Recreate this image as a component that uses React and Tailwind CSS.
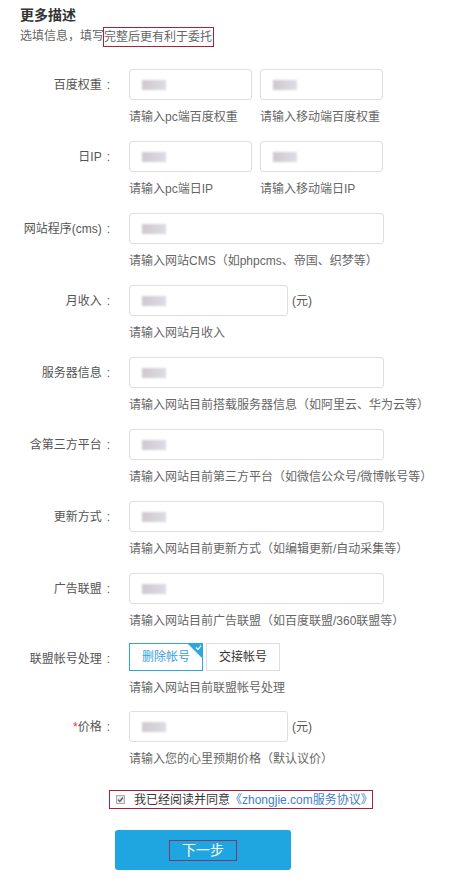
import React, { useState } from 'react';

const font = { fontFamily: '"Liberation Sans", "Noto Sans CJK SC", sans-serif' };

function Blur({ w = 'w-[24px]' }) {
  return (
    <div className={`h-[10px] ${w} bg-gradient-to-r from-[#cfc8d0] to-[#dcdde3] blur-[1px]`} />
  );
}

function TextInput({ width = 'w-[255px]' }) {
  return (
    <div className={`${width} h-[31px] border border-[#dedede] rounded-[3px] bg-white flex items-center pl-[12px]`}>
      <Blur />
    </div>
  );
}

function Row({ label, required, help, children }) {
  return (
    <div className="flex mb-[14px]">
      <div className="w-[113px] h-[31px] flex items-center justify-end text-[12px] text-[#555] shrink-0 whitespace-nowrap">
        {required && <span className="text-[#e4393c]">*</span>}
        {label}
        <span className="ml-[5px] mr-[3px]">:</span>
      </div>
      <div className="ml-[16px] flex flex-col">
        <div className="flex items-center">{children}</div>
        {help && (
          <div className="mt-[7px] leading-[20px] text-[12px] text-[#666] flex whitespace-nowrap">{help}</div>
        )}
      </div>
    </div>
  );
}

export default function App() {
  const [agreed, setAgreed] = useState(true);
  const [mode, setMode] = useState('delete');

  return (
    <div className="w-[462px] h-[893px] bg-white relative" style={font}>
      <div className="pl-[20px] pt-[5px]">
        <h2 className="text-[14px] font-bold text-[#333] leading-[20px]">更多描述</h2>
        <p className="text-[12px] text-[#666] leading-[18px] mt-[2px] flex whitespace-nowrap">
          <span>选填信息，填写</span>
          <span className="border border-[#a8203d] -ml-[1px] pr-[1px]">完整后更有利于委托</span>
        </p>
      </div>

      <div className="mt-[22px]">
        <Row label="百度权重" help={<><span className="w-[131px]">请输入pc端百度权重</span><span>请输入移动端百度权重</span></>}>
          <TextInput width="w-[123px]" />
          <div className="ml-[8px]"><TextInput width="w-[123px]" /></div>
        </Row>

        <Row label="日IP" help={<><span className="w-[131px]">请输入pc端日IP</span><span>请输入移动端日IP</span></>}>
          <TextInput width="w-[123px]" />
          <div className="ml-[8px]"><TextInput width="w-[123px]" /></div>
        </Row>

        <Row label="网站程序(cms)" help="请输入网站CMS（如phpcms、帝国、织梦等）">
          <TextInput />
        </Row>

        <Row label="月收入" help="请输入网站月收入">
          <TextInput width="w-[159px]" />
          <span className="ml-[4px] text-[12px] text-[#555]">(元)</span>
        </Row>

        <Row label="服务器信息" help="请输入网站目前搭载服务器信息（如阿里云、华为云等）">
          <TextInput />
        </Row>

        <Row label="含第三方平台" help="请输入网站目前第三方平台（如微信公众号/微博帐号等）">
          <TextInput />
        </Row>

        <Row label="更新方式" help="请输入网站目前更新方式（如编辑更新/自动采集等）">
          <TextInput />
        </Row>

        <Row label="广告联盟" help="请输入网站目前广告联盟（如百度联盟/360联盟等）">
          <TextInput />
        </Row>

        <div className="-mt-[2px]">
          <Row label="联盟帐号处理" help="请输入网站目前联盟帐号处理">
            <button
              onClick={() => setMode('delete')}
              className={`relative w-[74px] h-[28px] text-[12px] border overflow-hidden ${mode === 'delete' ? 'border-[#2ea7e0] text-[#3a9fdc]' : 'border-[#dedede] text-[#333]'}`}
            >
              删除帐号
              {mode === 'delete' && (
                <span className="absolute top-0 right-0 w-0 h-0 border-t-[14px] border-l-[14px] border-t-[#2ea7e0] border-l-transparent">
                  <svg className="absolute -top-[14px] -left-[7px]" width="7" height="7" viewBox="0 0 7 7">
                    <path d="M1 3.5 L3 5.5 L6 1.5" stroke="#fff" strokeWidth="1.2" fill="none" />
                  </svg>
                </span>
              )}
            </button>
            <button
              onClick={() => setMode('handover')}
              className={`relative ml-[3px] w-[74px] h-[28px] text-[12px] border ${mode === 'handover' ? 'border-[#2ea7e0] text-[#3a9fdc]' : 'border-[#dedede] text-[#333]'}`}
            >
              交接帐号
            </button>
          </Row>
        </div>

        <div className="-mt-[1px]">
          <Row label="价格" required help="请输入您的心里预期价格（默认议价）">
            <TextInput width="w-[159px]" />
            <span className="ml-[4px] text-[12px] text-[#555]">(元)</span>
          </Row>
        </div>
      </div>

      <div className="ml-[109px] mt-[21px] w-[264px] h-[19px] border border-[#a8203d] flex items-center text-[12px] whitespace-nowrap">
        <button
          onClick={() => setAgreed(!agreed)}
          className="ml-[6px] w-[9px] h-[9px] shrink-0 border border-[#aaa] bg-[#e8e8e8] flex items-center justify-center"
        >
          {agreed && (
            <svg width="7" height="7" viewBox="0 0 7 7">
              <path d="M1 3.6 L2.8 5.4 L6 1.5" stroke="#555" strokeWidth="1.3" fill="none" />
            </svg>
          )}
        </button>
        <span className="ml-[9px] text-[#333]">我已经阅读并同意</span>
        <span className="text-[#3d7fc6]">《zhongjie.com服务协议》</span>
      </div>

      <button className="ml-[115px] mt-[21px] w-[176px] h-[40px] bg-[#1fa6e1] rounded-[3px] flex items-center justify-center">
        <span className="border border-[#7a3a72] w-[68px] h-[21px] flex items-center justify-center text-white text-[14px]">下一步</span>
      </button>
    </div>
  );
}
